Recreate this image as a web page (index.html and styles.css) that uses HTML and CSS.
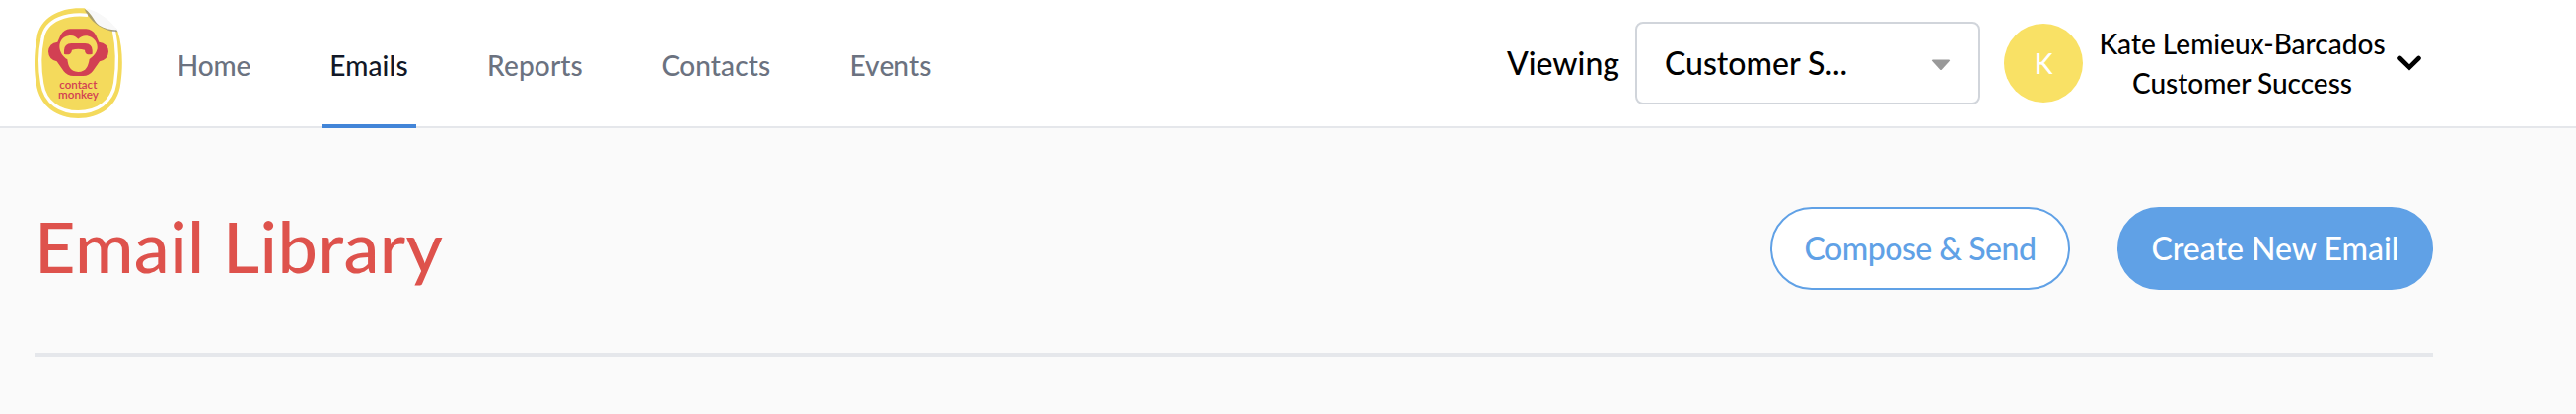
FILE: index.html
```html
<!DOCTYPE html>
<html lang="en">
<head>
<meta charset="utf-8">
<title>Email Library</title>
<link rel="stylesheet" href="styles.css">
</head>
<body>
<header class="topbar">
  <a class="logo" aria-label="contact monkey">
    <svg viewBox="45 24 267 336" width="89" height="112">
      <path fill="#f4da5c" d="M197 25C130 20 61 49 52 116C43 163 43 216 50 253C59 326 116 360 178 360C242 360 299 326 307 253C314 205 314 143 298 95Z"/>
      <path fill="none" stroke="#fff" stroke-width="10" d="M207 46C149 40 77 56 69 119C59 165 61 214 68 254C77 315 126 341 178 341C232 341 281 314 290 252C298 198 297 144 286 91"/>
      <path fill="#777" opacity=".6" d="M197 27C212 63 250 95 298 97L294 88Z"/>
      <path fill="#f8f8f8" d="M197 25C232 30 270 55 297 91C279 92 258 86 242 77C224 64 225 49 197 25Z"/>
      <path fill="#d24053" d="M153 88H202Q221 89 231 106L241 128Q269 132 270 157Q269 182 243 187L222 217Q211 231 193 231H163Q145 231 134 217L113 187Q88 182 87 157Q88 132 115 128L125 106Q135 89 153 88Z"/>
      <path fill="#f4da5c" d="M148 109C162 106 170 111 178 119C187 111 196 106 210 110C229 115 238 133 236 148C232 165 222 173 212 180C208 202 203 218 178 219C153 218 148 202 145 181C131 173 121 157 121 141C122 124 132 112 148 109Z"/>
      <path fill="#d24053" d="M135 164V153Q136 133 157 132H199Q220 133 221 153V164Q211 167 203 164Q198 161 198 152Q178 146 159 152Q158 161 153 164Q145 167 135 164Z"/>
      <text class="logo-text" x="121" y="270" textLength="114" lengthAdjust="spacingAndGlyphs">contact</text>
      <text class="logo-text" x="117" y="301" textLength="123" lengthAdjust="spacingAndGlyphs">monkey</text>
    </svg>
  </a>
  <nav class="tabs">
    <a class="tab">Home</a>
    <a class="tab tab-active">Emails</a>
    <a class="tab">Reports</a>
    <a class="tab">Contacts</a>
    <a class="tab">Events</a>
  </nav>
  <div class="account">
    <span class="viewing">Viewing</span>
    <div class="select">
      <span>Customer S...</span>
      <svg width="20" height="12" viewBox="0 0 20 12"><path fill="#999" d="M2 .5H18Q20 .5 18.700 2L11 10.400Q10 11.400 9 10.400L1.300 2Q0 .5 2 .5Z"/></svg>
    </div>
    <div class="avatar">K</div>
    <div class="user"><span>Kate Lemieux-Barcados</span><span>Customer Success</span></div>
    <svg class="chevron" width="24" height="16" viewBox="0 0 24 16"><path fill="none" stroke="#000" stroke-width="4.600" stroke-linecap="round" d="M2.500 3L12 12.300L21.500 3"/></svg>
  </div>
</header>
<main class="page">
  <div class="page-head">
    <h1 class="title">Email Library</h1>
    <div class="actions">
      <button class="btn btn-outline">Compose &amp; Send</button>
      <button class="btn btn-solid">Create New Email</button>
    </div>
  </div>
</main>
</body>
</html>
```
FILE: styles.css
```css
* { box-sizing: border-box; }

body {
  margin: 0;
  min-height: 420px;
  background: #fafafa;
  font-family: Lato, "Liberation Sans", sans-serif;
  color: #000;
}

.topbar {
  display: flex;
  height: 130px;
  padding: 0 157px 0 35px;
  background: #fff;
  border-bottom: 2px solid #e5e7eb;
}

.logo {
  width: 89px;
  padding-top: 8px;
  margin-right: 48px;
}

.logo svg { display: block; }

.logo-text {
  font-family: Lato, sans-serif;
  font-size: 33px;
  font-weight: 600;
  fill: #d24053;
}

.tabs {
  display: grid;
  grid-template-columns: 90px 96px 113px 126px 100px;
  gap: 64px;
  height: 130px;
}

.tab {
  display: flex;
  align-items: center;
  justify-content: center;
  padding-top: 6px;
  border-bottom: 4px solid transparent;
  font-size: 28px;
  font-weight: 500;
  line-height: 40px;
  letter-spacing: 0.15px;
  color: #6b7280;
}

.tab:first-child { letter-spacing: -0.1px; }

.tab-active {
  color: #111827;
  border-bottom-color: #4285d8;
}

.account {
  display: flex;
  align-items: center;
  height: 128px;
  margin-left: auto;
}

.viewing {
  margin-right: 16px;
  padding-bottom: 1px;
  font-size: 32px;
  font-weight: 500;
  line-height: 40px;
}

.select {
  display: flex;
  align-items: center;
  justify-content: space-between;
  width: 350px;
  height: 84px;
  margin-right: 24px;
  padding: 0 28px 2px;
  border: 2px solid #d1d5db;
  border-radius: 8px;
  font-size: 32px;
  font-weight: 500;
}

.select svg { margin-top: 5px; }

.avatar {
  width: 80px;
  height: 80px;
  margin-right: 16px;
  border-radius: 50%;
  background: #f9e165;
  color: #fff;
  font-size: 28px;
  font-weight: 500;
  line-height: 80px;
  text-align: center;
}

.user {
  display: flex;
  flex-direction: column;
  align-items: center;
  width: 291px;
  font-size: 28px;
  font-weight: 500;
  line-height: 40px;
  white-space: nowrap;
}

.chevron { margin-left: 12px; }

.page {
  margin-left: 35px;
  width: 2432px;
}

.page-head {
  display: flex;
  align-items: center;
  justify-content: space-between;
  height: 232px;
  border-bottom: 4px solid #e5e7eb;
}

.title {
  margin: 9px 0 0;
  font-size: 72px;
  font-weight: 500;
  line-height: 80px;
  letter-spacing: 0.35px;
  color: #de524c;
}

.actions {
  display: flex;
  gap: 48px;
  margin-top: 16px;
}

.btn {
  height: 84px;
  padding: 0 0 2px;
  border: 2px solid #60a1e6;
  border-radius: 42px;
  font: 500 32px Lato, sans-serif;
}

.btn-outline {
  width: 304px;
  background: #fff;
  color: #60a1e6;
  letter-spacing: -0.5px;
}

.btn-solid {
  width: 320px;
  background: #60a1e6;
  color: #fff;
}
```
